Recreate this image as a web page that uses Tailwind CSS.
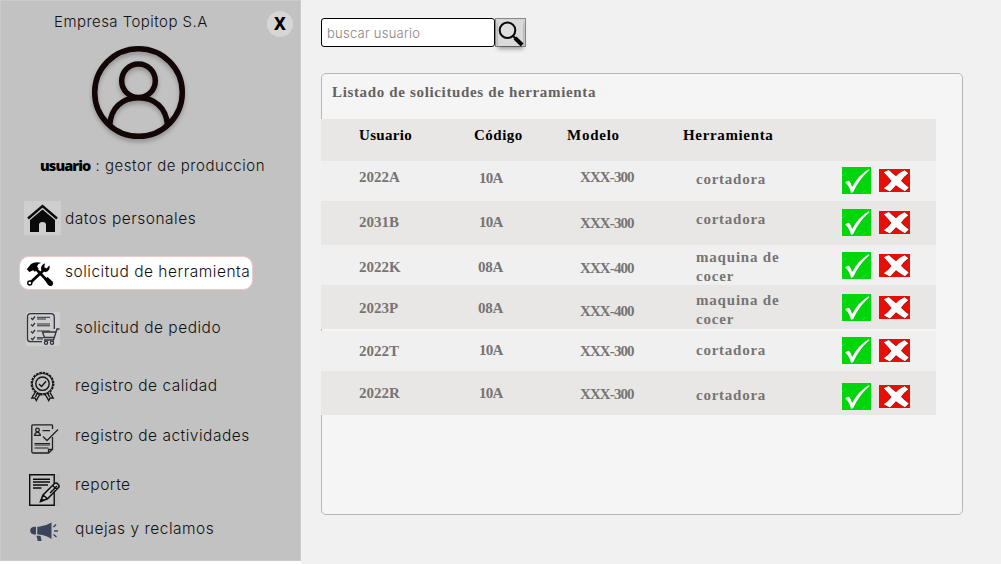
<!DOCTYPE html>
<html lang="es">
<head>
<meta charset="utf-8">
<title>Solicitud de herramienta</title>
<script src="https://cdn.jsdelivr.net/npm/@tailwindcss/browser@4"></script>
</head>
<body class="w-[1001px] h-[564px] overflow-hidden bg-[#f1f1f1] flex">

<svg class="hidden">
  <symbol id="ok" viewBox="0 0 29 27">
    <path d="M0 0h29v27H0z" fill="#00d60b"/>
    <path d="M0 9l4-3M20 26l4-3" stroke="#3ae242" stroke-width=".7"/>
    <path d="M4.600 16.200Q7 13.400 8 14.400Q9.800 16.500 10.600 20.300Q16 9 27.800 3.200L28.200 4Q18 12 12 25.200L10 26.600Q8.500 20 4.600 16.200z" transform="translate(-.7 -.5)" fill="#064d09" opacity=".5"/>
    <path d="M3.300 15.600Q6 13 7.500 14.200Q9.300 16.500 10 20Q16.500 8 26.800 2.300L27.500 3.200Q17 12 11.300 25L9 26Q7.500 19.500 3.300 15.600z" fill="#fff"/>
  </symbol>
  <symbol id="no" viewBox="0 0 31 23">
    <path d="M0 0h31v23H0z" fill="#e80d05"/>
    <path d="M4.500 3.500L10 .5Q14 4.500 17.300 7Q20.500 3 25.500 .8L30 4.500Q25.500 7.500 22.500 11.700Q26 15.500 30.300 18.200L26.500 22.700Q21 20.500 17 17Q14 20.500 10.500 23L4.300 19.500Q9 16 12 12Q9.500 7.500 4.500 3.500z" fill="#7d1210"/>
    <path d="M4.800 3.300L9.800 .9Q13.500 4.500 17 7.300Q20.500 3.300 25.500 1.200L29.300 4.300Q25 7.500 22 11.700Q25.500 15.500 29.700 18.500L26 22.200Q21 19.800 17 16.300Q14 19.800 10.800 22.400L4.800 19.300Q9.700 16 12.500 12Q9 7.500 4.800 3.300z" fill="#fff"/>
  </symbol>
</svg>

<aside class="w-[301px] h-[564px] shrink-0 bg-white">
  <div class="relative w-[301px] h-[561px] bg-[#c2c2c2] border border-[#cbcbcb] font-['Inter','Noto_Sans',sans-serif] font-light text-[15px] leading-[20px] text-[#111] whitespace-nowrap">
    <button class="absolute left-[266px] top-[10px] w-[26px] h-[26px] rounded-full bg-[#d6d6d6] flex items-center justify-center font-['Noto_Sans',sans-serif] font-extrabold text-[17px] text-black">X</button>
    <h1 class="pl-[53px] pt-[11px] tracking-[0.45px]">Empresa Topitop S.A</h1>
    <svg class="block ml-[86px] mt-[10px] w-[104px] h-[108px] drop-shadow-[0_3px_2px_rgba(0,0,0,0.25)]" viewBox="87 42 104 108" fill="none" stroke="#130607" stroke-width="5.500">
      <circle cx="138.500" cy="92.500" r="43.800"/>
      <circle cx="138.500" cy="80.700" r="16.800"/>
      <path d="M109.800 124.500C111 108 122 97.800 138.500 97.800S166 108 167.500 124.500"/>
    </svg>
    <p class="pl-[39px] mt-[6px] flex gap-[5px]"><b class="font-['Open_Sans',sans-serif] font-extrabold text-[14.5px] tracking-[-0.9px] text-black">usuario</b><span class="tracking-[0.55px]">: gestor de produccion</span></p>

    <nav class="mt-[25px] text-[15.5px] leading-[22px] tracking-[0.5px]">
      <a class="flex h-[34px] ml-[23px] mb-[21px]">
        <svg class="w-[37px] h-[34px] bg-[#cecece] mr-[4px]" viewBox="0 0 37 34">
          <path d="M4 17.500L18.500 5L33 17.500" fill="none" stroke="#0a0a0a" stroke-width="2.400"/>
          <path d="M18.500 8.500L31 19v12H22v-7q0-3-3.500-3T15 24v7H6V19z" fill="#0a0a0a"/>
        </svg>
        <span class="mt-[7px]">datos personales</span>
      </a>
      <a class="flex h-[34px] w-[234px] ml-[18px] mb-[22px] rounded-[10px] bg-white border border-[#ecc9ca]">
        <svg class="w-[28px] h-[26px] ml-[6px] mt-[4px] mr-[11px]" viewBox="0 0 28 26">
          <path d="M.8 8.200L5 3Q9 .2 15 1.800Q11.500 3 11 5.500L12.600 7.500L8.900 10.800L7.200 9.200L3.400 11z"/>
          <path d="M10.500 8.500L23 21.500" stroke="#000" stroke-width="2.600"/>
          <path d="M18.500 18.800L21.500 16L26.500 20.500Q28 23 26 24.500T21.800 23.500z"/>
          <path d="M17.500 9.200L4.500 21.500" stroke="#000" stroke-width="2.800"/>
          <path d="M15.200 9Q14 4.500 19 2.200L18.300 6.200L20.500 7.500L23.500 4.200Q24.500 9.500 19.500 11.300z"/>
          <circle cx="3.800" cy="22" r="2" fill="#fff" stroke="#000" stroke-width="1.400"/>
        </svg>
        <span class="mt-[4px]">solicitud de herramienta</span>
      </a>
      <a class="flex h-[34px] ml-[25px] mb-[24px]">
        <svg class="w-[34px] h-[34px] bg-[#cdcdcd] mr-[15px]" viewBox="0 0 34 34" fill="none" stroke="#30323e" stroke-width="1.300">
          <path d="M28.300 17V5.500Q28.300 1.700 25 1.700H4.500Q1.500 1.700 1.500 5V27Q1.500 29.700 4.500 29.700H16"/>
          <path d="M11 5.300H24M11 7H20M11 12H24M11 13.800H24M11 19H24M11 25.700H18M11 27H17" stroke-width="1"/>
          <path d="M5 6l1.600 1.500L9 4.500M5 12.500L6.600 14L9 11M5 19.500L6.600 21L9 18M5 26.200l1.600 1.500L9 24.700"/>
          <path d="M33.500 17H31L27.500 28H18M16 20H30M16.500 20l2 5.500H28"/>
          <circle cx="20" cy="30.700" r="1.600"/><circle cx="26" cy="30.700" r="1.600"/>
        </svg>
        <span class="mt-[5px]">solicitud de pedido</span>
      </a>
      <a class="flex h-[32px] ml-[29px] mb-[22px]">
        <svg class="w-[26px] h-[32px] mr-[19px]" viewBox="0 0 26 32" fill="none" stroke="#151515" stroke-width="1.400">
          <circle cx="12.500" cy="13.700" r="11" stroke-width="1.800" stroke-dasharray="2.500 .950"/>
          <circle cx="12.500" cy="13.700" r="10.200" stroke-width="1"/>
          <circle cx="12.500" cy="13.700" r="6.700"/>
          <path d="M9 14l2.500 2.500L16 11.300"/>
          <path d="M5 22.500L1.800 28H5l1.300 2.500L10 24M20 22.500L23.200 28H20l-1.300 2.500L15 24M7 23.500L5.500 27M18 23.500L19.500 27"/>
        </svg>
        <span class="mt-[5px]">registro de calidad</span>
      </a>
      <a class="flex h-[30px] ml-[30px] mb-[20px]">
        <svg class="w-[28px] h-[30px] mr-[16px]" viewBox="0 0 28 30" fill="none" stroke="#202020" stroke-width="1.300">
          <path d="M21.500 5V1.500Q21.500.8 20.500.8H1.800Q.8.8.8 2V27.500Q.8 29 2 29H17.500L21.500 25.500V13M17.500 29V25.500H21.500"/>
          <circle cx="6.500" cy="6" r="1.800"/><path d="M3.600 11.300Q4 8.300 6.500 8.300T9.300 11.300z"/>
          <path d="M11.500 6.700H19M12 12.500l4 4L27 5.500"/>
          <path d="M3.500 19.500H19M3.500 21H19M3.500 24H17.500" stroke-width="1"/>
        </svg>
        <span class="mt-[1px]">registro de actividades</span>
      </a>
      <a class="flex h-[32px] ml-[28px] mb-[12px]">
        <svg class="w-[31px] h-[32px] mr-[15px]" viewBox="0 0 31 32" fill="none" stroke="#0c0c0c">
          <path d="M25 0h6v32h-6z" fill="#bdbdbd" stroke="none"/>
          <path d="M.7.7H25.200V31.300H.7z" stroke-width="1.400"/>
          <path d="M4 5.300H21M4 8H21M4 11H19M4 14H12.500" stroke-width="1.600"/>
          <path d="M11.500 27.500L14 21L25.500 9.500Q28 8 30 11.500L30 13L18.500 24.800zM14 21l4.500 3.800M23.500 11.500l4.500 4M21 19L28 12" fill="#c8c8c8" stroke-width="1.500"/>
          <path d="M11.200 27.800l1.500-3.500 2.200 2z" fill="#0c0c0c"/>
        </svg>
        <span>reporte</span>
      </a>
      <a class="flex h-[26px] ml-[29px]">
        <svg class="w-[28px] h-[20px] mt-[4px] mr-[17px]" viewBox="0 0 28 20" fill="#3a445b">
          <path d="M6 4.800V12.500H4Q.2 12 .2 8.600T4 4.800zM7.300 4.800H9Q16 4 21.500.5V17Q16 13.200 9 12.500H7.300zM6.500 13.800h4l1.200 5.200H7.700z"/>
          <path d="M23.500 5L26 2.500M24 9h4M23.500 12.500L26.500 15" stroke="#3a445b" stroke-width="1.500"/>
        </svg>
        <span>quejas y reclamos</span>
      </a>
    </nav>
  </div>
</aside>

<main class="pl-[20px] pt-[18px]">
  <form class="flex h-[29px]">
    <div class="w-[174px] h-[29px] bg-white border border-black rounded-[3px] pl-[5px] font-['Inter','Noto_Sans',sans-serif] font-light text-[13px] leading-[28px] tracking-[0.25px] text-[#8d8080]">buscar usuario</div>
    <div class="w-[31px] h-[29px] bg-[#d9d9d9] border border-[#8a8a8a]">
      <svg class="block w-[29px] h-[29px] drop-shadow-[0_3px_2px_rgba(0,0,0,0.35)]" viewBox="0 0 29 29">
        <path d="M2 1H27V27H2z" fill="#dadada"/>
        <circle cx="11.500" cy="11.300" r="7.800" fill="#dedede" stroke="#080808" stroke-width="2"/>
        <path d="M17 17l4 4" stroke="#080808" stroke-width="2"/><path d="M19 19l7.200 7" stroke="#080808" stroke-width="4"/>
      </svg>
    </div>
  </form>

  <section class="mt-[26px] w-[642px] h-[442px] bg-[#f5f5f5] border border-[#b6b6b6] rounded-[5px] font-['Liberation_Serif',serif] font-bold text-[15px] leading-[18px] text-[#777473] whitespace-nowrap">
    <h2 class="h-[45px] pl-[10px] pt-[9px] text-[#646261] tracking-[0.65px]">Listado de solicitudes de herramienta</h2>
    <div class="-ml-px w-[615px]">
      <div class="flex h-[42px] bg-[#e8e7e6] text-black pl-[38px] pt-[7px]">
        <span class="w-[115px] tracking-[0.3px]">Usuario</span><span class="w-[93px] tracking-[0.5px]">Código</span><span class="w-[116px] tracking-[0.75px]">Modelo</span><span class="tracking-[0.65px]">Herramienta</span>
      </div>
      <div class="flex h-[40px] bg-[#f0f0f0] pl-[38px]">
        <span class="w-[120px] pt-[7px]">2022A</span><span class="w-[101px] pt-[8px] tracking-[-0.7px]">10A</span><span class="w-[116px] pt-[7px] tracking-[-0.9px]">XXX-300</span><span class="w-[146px] pt-[9px] tracking-[0.75px]">cortadora</span>
        <svg class="w-[29px] h-[27px] mt-[6px] mr-[8px]"><use href="#ok"/></svg><svg class="w-[31px] h-[23px] mt-[8px]"><use href="#no"/></svg>
      </div>
      <div class="flex h-[44px] bg-[#e8e7e6] pl-[38px]">
        <span class="w-[120px] pt-[12px]">2031B</span><span class="w-[101px] pt-[12px] tracking-[-0.7px]">10A</span><span class="w-[116px] pt-[13px] tracking-[-0.9px]">XXX-300</span><span class="w-[146px] pt-[9px] tracking-[0.75px]">cortadora</span>
        <svg class="w-[29px] h-[27px] mt-[8px] mr-[8px]"><use href="#ok"/></svg><svg class="w-[31px] h-[23px] mt-[10px]"><use href="#no"/></svg>
      </div>
      <div class="flex h-[40px] bg-[#f0f0f0] pl-[38px]">
        <span class="w-[119px] pt-[13px]">2022K</span><span class="w-[102px] pt-[13px] tracking-[-0.3px]">08A</span><span class="w-[116px] pt-[14px] tracking-[-0.9px]">XXX-400</span><span class="w-[146px] pt-[3px] leading-[19px] tracking-[0.8px]">maquina de<br>cocer</span>
        <svg class="w-[29px] h-[27px] mt-[7px] mr-[8px]"><use href="#ok"/></svg><svg class="w-[31px] h-[23px] mt-[9px]"><use href="#no"/></svg>
      </div>
      <div class="flex h-[44px] bg-[#e8e7e6] pl-[38px]">
        <span class="w-[119px] pt-[14px]">2023P</span><span class="w-[102px] pt-[14px] tracking-[-0.3px]">08A</span><span class="w-[116px] pt-[17px] tracking-[-0.9px]">XXX-400</span><span class="w-[146px] pt-[6px] leading-[19px] tracking-[0.8px]">maquina de<br>cocer</span>
        <svg class="w-[29px] h-[27px] mt-[9px] mr-[8px]"><use href="#ok"/></svg><svg class="w-[31px] h-[23px] mt-[11px]"><use href="#no"/></svg>
      </div>
      <div class="flex h-[40px] mt-[2px] bg-[#f0f0f0] pl-[38px]">
        <span class="w-[120px] pt-[11px]">2022T</span><span class="w-[101px] pt-[10px] tracking-[-0.7px]">10A</span><span class="w-[116px] pt-[11px] tracking-[-0.9px]">XXX-300</span><span class="w-[146px] pt-[10px] tracking-[0.75px]">cortadora</span>
        <svg class="w-[29px] h-[27px] mt-[6px] mr-[8px]"><use href="#ok"/></svg><svg class="w-[31px] h-[23px] mt-[8px]"><use href="#no"/></svg>
      </div>
      <div class="flex h-[44px] bg-[#e8e7e6] pl-[38px]">
        <span class="w-[120px] pt-[13px]">2022R</span><span class="w-[101px] pt-[13px] tracking-[-0.7px]">10A</span><span class="w-[116px] pt-[14px] tracking-[-0.9px]">XXX-300</span><span class="w-[146px] pt-[15px] tracking-[0.75px]">cortadora</span>
        <svg class="w-[29px] h-[27px] mt-[12px] mr-[8px]"><use href="#ok"/></svg><svg class="w-[31px] h-[23px] mt-[14px]"><use href="#no"/></svg>
      </div>
    </div>
  </section>
</main>
</body>
</html>
